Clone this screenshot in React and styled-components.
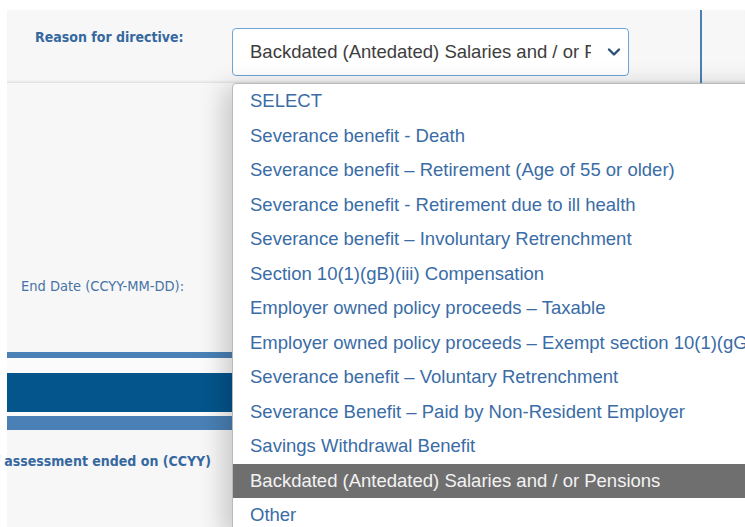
import React from "react";
import styled, { createGlobalStyle } from "styled-components";

const GlobalStyle = createGlobalStyle`
  html, body {
    margin: 0;
    padding: 0;
    background: #ffffff;
    overflow: hidden;
  }
  body {
    font-family: "DejaVu Sans Condensed", "DejaVu Sans", sans-serif;
  }
`;

const options = [
  "SELECT",
  "Severance benefit - Death",
  "Severance benefit \u2013 Retirement (Age of 55 or older)",
  "Severance benefit - Retirement due to ill health",
  "Severance benefit \u2013 Involuntary Retrenchment",
  "Section 10(1)(gB)(iii) Compensation",
  "Employer owned policy proceeds \u2013 Taxable",
  "Employer owned policy proceeds \u2013 Exempt section 10(1)(gG)",
  "Severance benefit \u2013 Voluntary Retrenchment",
  "Severance Benefit \u2013 Paid by Non-Resident Employer",
  "Savings Withdrawal Benefit",
  "Backdated (Antedated) Salaries and / or Pensions",
  "Other",
];

const SELECTED = 11;

const Page = styled.div`
  width: 745px;
  height: 527px;
  padding: 10px 0 0 7px;
  box-sizing: border-box;
  overflow: hidden;
`;

const Form = styled.div`
  background: #f7f7f7;
  display: flex;
  flex-direction: column;
`;

const TopRow = styled.div`
  display: flex;
  height: 73px;
  box-shadow: inset 0 -3px 3px -2px rgba(0, 0, 0, 0.12);
`;

const Label = styled.div`
  width: ${(p) => p.$width || 225}px;
  box-sizing: border-box;
  padding: ${(p) => p.$pad || "0"};
  font-size: ${(p) => (p.$bold ? 14 : 14.5)}px;
  font-weight: ${(p) => (p.$bold ? 700 : 400)};
  color: ${(p) => (p.$bold ? "#3668a0" : "#4673a6")};
  white-space: nowrap;
  display: flex;
  justify-content: ${(p) => (p.$right ? "flex-end" : "flex-start")};
`;

const SelectCell = styled.div`
  position: relative;
  width: 468px;
  padding-top: 18px;
  box-sizing: border-box;
`;

const SelectBox = styled.div`
  width: 397px;
  height: 48px;
  box-sizing: border-box;
  border: 1px solid #6ea4d8;
  border-radius: 4px;
  background: #ffffff;
  display: flex;
  align-items: center;
  padding: 0 7px 0 17px;
  font-family: "Liberation Sans", Arial, sans-serif;
  font-size: 18.5px;
  color: #3d3d3d;
`;

const SelectValue = styled.span`
  flex: 1;
  overflow: hidden;
  white-space: nowrap;
  margin-right: 16px;
`;

const Divider = styled.div`
  width: 2px;
  background: #4a80b5;
`;

const Chevron = () => (
  <svg width="14" height="10" viewBox="0 0 14 10">
    <polyline
      points="2,2.5 7,7.5 12,2.5"
      fill="none"
      stroke="#2c4f78"
      strokeWidth="2.4"
      strokeLinecap="round"
      strokeLinejoin="round"
    />
  </svg>
);

const OptionList = styled.ul`
  position: absolute;
  top: 73px;
  left: 0;
  width: 620px;
  margin: 0;
  padding: 0;
  list-style: none;
  background: #ffffff;
  border: 1px solid #b9b9b9;
  border-radius: 4px 0 0 0;
  box-shadow: -8px 4px 26px rgba(0, 0, 0, 0.2);
  font-family: "Liberation Sans", Arial, sans-serif;
  font-size: 18.5px;
  z-index: 5;
`;

const Option = styled.li`
  height: 34.5px;
  line-height: 34.5px;
  padding-left: 17px;
  white-space: nowrap;
  color: ${(p) => (p.$active ? "#f3f3f3" : "#3a6ca6")};
  background: ${(p) => (p.$active ? "#6f6f6f" : "transparent")};
`;

const DateRow = styled.div`
  height: 269px;
  display: flex;
  align-items: flex-end;
  padding-bottom: 58px;
  box-sizing: border-box;
`;

const Band = styled.div`
  height: ${(p) => p.$h}px;
  background: ${(p) => p.$color};
`;

const Gap = styled.div`
  height: ${(p) => p.$h}px;
  background: #fbfbfb;
`;

const YearRow = styled.div`
  height: 100px;
  padding-top: 23px;
  box-sizing: border-box;
`;

export default function App() {
  return (
    <>
      <GlobalStyle />
      <Page>
        <Form>
          <TopRow>
            <Label $bold $pad="19px 0 0 28px">
              Reason for directive:
            </Label>
            <SelectCell>
              <SelectBox>
                <SelectValue>{options[SELECTED]}</SelectValue>
                <Chevron />
              </SelectBox>
              <OptionList>
                {options.map((o, i) => (
                  <Option key={o} $active={i === SELECTED}>
                    {o}
                  </Option>
                ))}
              </OptionList>
            </SelectCell>
            <Divider />
          </TopRow>
          <DateRow>
            <Label $pad="0 0 0 14px">End Date (CCYY-MM-DD):</Label>
          </DateRow>
          <Band $h={6} $color="#4a80b5" />
          <Gap $h={15} />
          <Band $h={39} $color="#04558c" />
          <Gap $h={4} />
          <Band $h={14} $color="#4a80b5" />
          <YearRow>
            <Label $bold $right $width={204}>
              Year of assessment ended on (CCYY)
            </Label>
          </YearRow>
        </Form>
      </Page>
    </>
  );
}
